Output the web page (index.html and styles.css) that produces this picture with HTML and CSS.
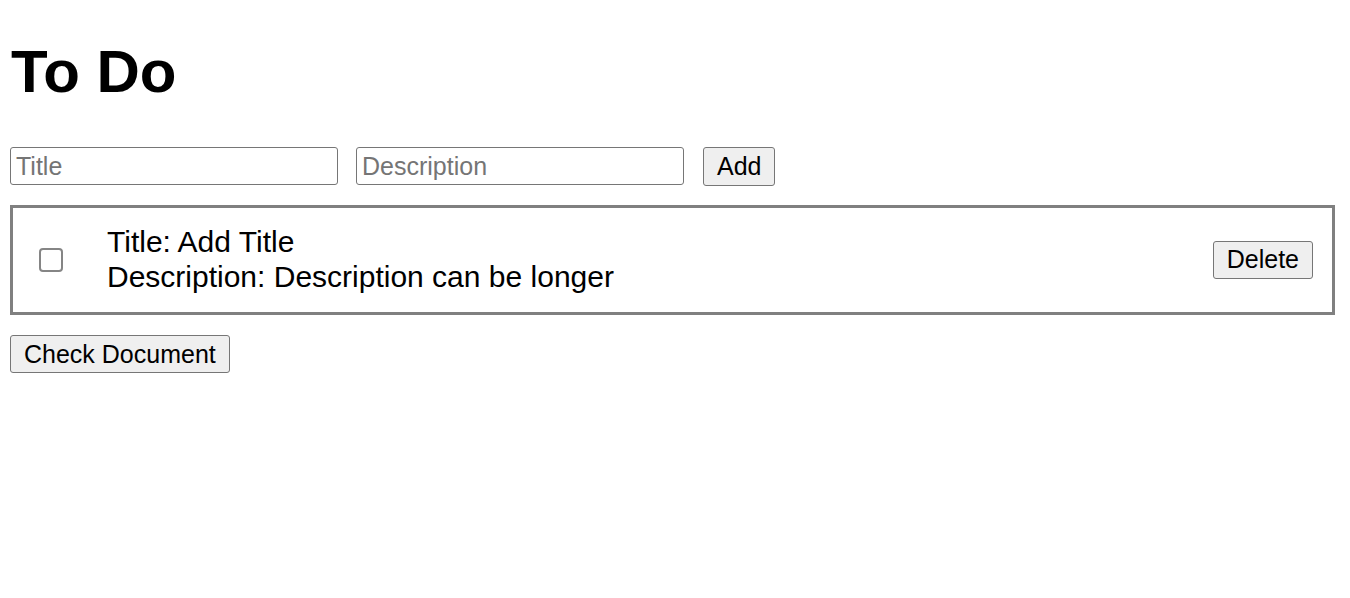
FILE: index.html
```html
<!DOCTYPE html>
<html lang="en">
<head>
<meta charset="utf-8">
<title>To Do</title>
<link rel="stylesheet" href="styles.css">
</head>
<body>
<div class="app">
  <h1 class="page-title">To Do</h1>
  <form class="add-form">
    <input class="field" type="text" placeholder="Title">
    <input class="field" type="text" placeholder="Description">
    <button class="btn btn-add" type="button">Add</button>
  </form>
  <ul class="task-list">
    <li class="task">
      <input class="task-check" type="checkbox">
      <div class="task-text">
        <div class="task-line">Title: Add Title</div>
        <div class="task-line">Description: Description can be longer</div>
      </div>
      <button class="btn btn-delete" type="button">Delete</button>
    </li>
  </ul>
  <button class="btn btn-check" type="button">Check Document</button>
</div>
</body>
</html>
```

FILE: styles.css
```css
html, body {
  background: #ffffff;
}

body {
  margin: 0;
  font-family: "Liberation Sans", Arial, sans-serif;
  color: #000000;
}

.app {
  padding: 0 15px 0 10px;
}

.page-title {
  font-size: 60px;
  font-weight: bold;
  line-height: 69px;
  margin: 37px 0 41px 1px;
}

.add-form {
  display: flex;
  align-items: flex-start;
  gap: 18px;
  margin: 0;
}

.field {
  box-sizing: border-box;
  width: 328px;
  height: 38px;
  margin: 0;
  padding: 0 5px;
  border: 1px solid #767676;
  border-radius: 3px;
  font-family: "Liberation Sans", Arial, sans-serif;
  font-size: 25px;
  color: #000000;
  background: #ffffff;
  outline: none;
}

.field::placeholder {
  color: #757575;
}

.btn {
  box-sizing: border-box;
  height: 38px;
  margin: 0;
  padding: 0 13px;
  border: 1px solid #767676;
  border-radius: 3px;
  background: #efefef;
  font-family: "Liberation Sans", Arial, sans-serif;
  font-size: 25px;
  color: #000000;
  line-height: 1;
}

.btn-add {
  height: 39px;
  margin-left: 1px;
}

.task-list {
  list-style: none;
  margin: 19px 0 0 0;
  padding: 0;
}

.task {
  display: flex;
  align-items: center;
  border: 3px solid #808080;
  padding: 17px 19px 18px 26px;
}

.task-check {
  appearance: none;
  -webkit-appearance: none;
  box-sizing: border-box;
  width: 24px;
  height: 24px;
  margin: 0;
  border: 2px solid #858585;
  border-radius: 4px;
  background: #ffffff;
  flex: none;
}

.task-text {
  flex: 1;
  margin-left: 44px;
  font-size: 30px;
  line-height: 34.5px;
}

.btn-check {
  margin-top: 20px;
}
```
